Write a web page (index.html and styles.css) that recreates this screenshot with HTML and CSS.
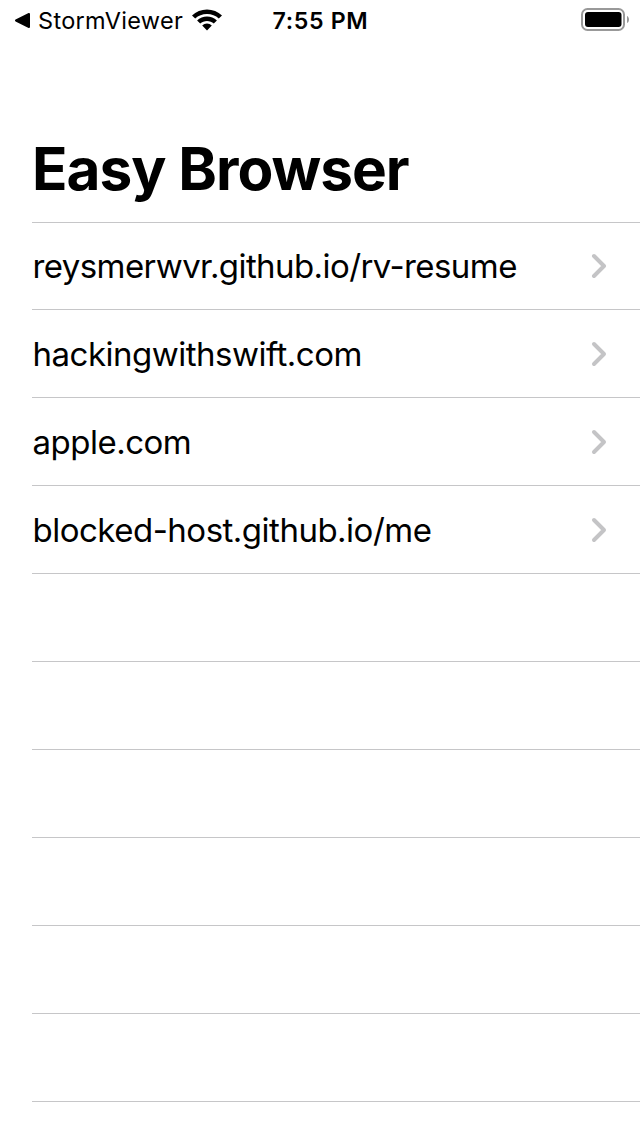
FILE: index.html
```html
<!DOCTYPE html>
<html lang="en">
<head>
<meta charset="utf-8">
<title>Easy Browser</title>
<link rel="stylesheet" href="styles.css">
</head>
<body>
<header class="status">
  <div class="back">
    <svg class="back-arrow" width="16" height="16" viewBox="0 0 16 16"><path d="M1 8.500 14 2V15Z" stroke="#000" stroke-width="2" stroke-linejoin="round"/></svg>
    <span class="back-label">StormViewer</span>
    <svg class="wifi" width="30" height="22" viewBox="0 0 30 22"><path d="M15 0.500C9.300 0.500 4 2.700 0 6.400L3.200 9.500C6.300 6.600 10.400 5 15 5S23.700 6.600 26.800 9.500L30 6.400C26 2.700 20.700 .5 15 .5ZM15 7.600C11.300 7.600 7.800 9 5.100 11.500L8.200 14.600C10 12.900 12.400 12 15 12S20 12.900 21.800 14.600L24.900 11.500C22.200 9 18.700 7.600 15 7.600ZM15 14.600C13.200 14.600 11.500 15.300 10.200 16.600L15 21.500 19.800 16.600C18.500 15.300 16.800 14.600 15 14.600Z"/></svg>
  </div>
  <time class="clock">7:55 PM</time>
  <svg class="battery" width="49" height="24" viewBox="0 0 49 24"><rect x="1" y="1" width="42" height="21" rx="5.500" fill="none" stroke="#999" stroke-width="2"/><rect x="4" y="4" width="36.500" height="15" rx="3"/><path d="M46 8C48.700 9 48.700 14 46 15Z" fill="#999"/></svg>
</header>
<h1 class="title">Easy Browser</h1>
<ul class="list">
  <li class="row"><span class="site site-first">reysmerwvr.github.io/rv-resume</span><svg class="chevron" width="16" height="24" viewBox="0 0 16 24"><path d="M3 2 13 12 3 22"/></svg></li>
  <li class="row"><span class="site">hackingwithswift.com</span><svg class="chevron" width="16" height="24" viewBox="0 0 16 24"><path d="M3 2 13 12 3 22"/></svg></li>
  <li class="row"><span class="site">apple.com</span><svg class="chevron" width="16" height="24" viewBox="0 0 16 24"><path d="M3 2 13 12 3 22"/></svg></li>
  <li class="row"><span class="site">blocked-host.github.io/me</span><svg class="chevron" width="16" height="24" viewBox="0 0 16 24"><path d="M3 2 13 12 3 22"/></svg></li>
  <li class="row"></li><li class="row"></li><li class="row"></li><li class="row"></li><li class="row"></li><li class="row"></li>
</ul>
</body>
</html>
```
FILE: styles.css
```css
* { box-sizing: border-box; }
body { margin: 0; height: 1136px; overflow: hidden; background: #fff; color: #000; font-family: Inter, sans-serif; }
.status { display: grid; grid-template-columns: 1fr 96px 1fr; align-items: center; height: 40px; padding: 0 10px 0 15px; }
.back { display: flex; align-items: center; }
.back-label { margin-left: 7px; padding-top: 1px; width: 144px; font-size: 23.5px; letter-spacing: 0.3px; white-space: nowrap; }
.wifi { margin-left: 10px; }
.clock { margin-left: -2px; font-size: 23.2px; font-weight: 600; letter-spacing: 0.65px; white-space: nowrap; padding-top: 1px; }
.battery { justify-self: end; }
.title { margin: 0; height: 182px; padding: 93px 0 0 32px; font-size: 58.5px; line-height: 72px; font-weight: 700; letter-spacing: -1px; white-space: nowrap; }
.list { list-style: none; margin: 0 0 0 32px; padding: 0; border-top: 1px solid #c6c6c8; }
.row { display: flex; align-items: center; justify-content: space-between; height: 88px; padding-right: 33px; border-bottom: 1px solid #c6c6c8; }
.row:first-child { height: 87px; }
.site { padding: 1px 0 0 0.5px; font-size: 33px; letter-spacing: -0.5px; white-space: nowrap; }
.site-first { padding-top: 0; letter-spacing: -0.58px; }
.chevron { overflow: visible; fill: none; stroke: #c4c4c6; stroke-width: 4; stroke-linecap: round; stroke-linejoin: round; }
```
